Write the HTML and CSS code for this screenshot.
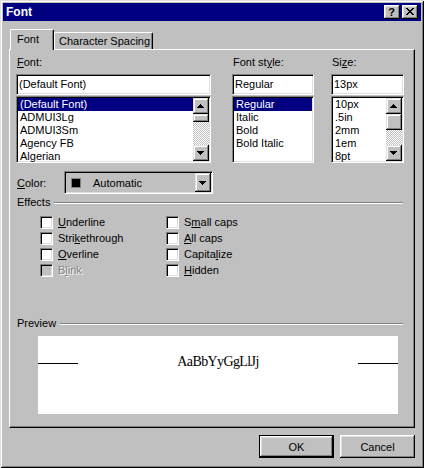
FILE: index.html
```html
<!DOCTYPE html>
<html>
<head>
<meta charset="utf-8">
<title>Font</title>
<link rel="stylesheet" href="styles.css">
</head>
<body>
<div class="window">
  <div class="titlebar">
    <span class="title">Font</span>
    <div class="caption-btns">
      <div class="cap-btn help">?</div>
      <div class="cap-btn">
        <svg width="16" height="14" viewBox="0 0 16 14" shape-rendering="crispEdges">
          <g fill="#000">
            <rect x="4" y="3" width="2" height="1"/><rect x="10" y="3" width="2" height="1"/>
            <rect x="5" y="4" width="2" height="1"/><rect x="9" y="4" width="2" height="1"/>
            <rect x="6" y="5" width="4" height="1"/>
            <rect x="7" y="6" width="2" height="1"/>
            <rect x="6" y="7" width="4" height="1"/>
            <rect x="5" y="8" width="2" height="1"/><rect x="9" y="8" width="2" height="1"/>
            <rect x="4" y="9" width="2" height="1"/><rect x="10" y="9" width="2" height="1"/>
          </g>
        </svg>
      </div>
    </div>
  </div>

  <div class="body">
    <div class="tabs">
      <div class="tab active">Font</div>
      <div class="tab">Character Spacing</div>
    </div>

    <div class="panel">
      <div class="fields">
        <div class="col col-font">
          <div class="label"><u>F</u>ont:</div>
          <div class="textbox">(Default Font)</div>
          <div class="list">
            <div class="items">
              <div class="item selected">(Default Font)</div>
              <div class="item">ADMUI3Lg</div>
              <div class="item">ADMUI3Sm</div>
              <div class="item">Agency FB</div>
              <div class="item">Algerian</div>
            </div>
            <div class="scrollbar">
              <div class="sb-btn">
                <svg width="16" height="16" viewBox="0 0 16 16" shape-rendering="crispEdges"><g fill="#000"><rect x="7" y="6" width="1" height="1"/><rect x="6" y="7" width="3" height="1"/><rect x="5" y="8" width="5" height="1"/><rect x="4" y="9" width="7" height="1"/></g></svg>
              </div>
              <div class="sb-track"><div class="sb-thumb thumb-small"></div></div>
              <div class="sb-btn">
                <svg width="16" height="16" viewBox="0 0 16 16" shape-rendering="crispEdges"><g fill="#000"><rect x="4" y="6" width="7" height="1"/><rect x="5" y="7" width="5" height="1"/><rect x="6" y="8" width="3" height="1"/><rect x="7" y="9" width="1" height="1"/></g></svg>
              </div>
            </div>
          </div>
        </div>

        <div class="col col-style">
          <div class="label">Font st<u>y</u>le:</div>
          <div class="textbox">Regular</div>
          <div class="list">
            <div class="items">
              <div class="item selected">Regular</div>
              <div class="item">Italic</div>
              <div class="item">Bold</div>
              <div class="item">Bold Italic</div>
            </div>
          </div>
        </div>

        <div class="col col-size">
          <div class="label">Si<u>z</u>e:</div>
          <div class="textbox">13px</div>
          <div class="list">
            <div class="items">
              <div class="item">10px</div>
              <div class="item">.5in</div>
              <div class="item">2mm</div>
              <div class="item">1em</div>
              <div class="item">8pt</div>
            </div>
            <div class="scrollbar">
              <div class="sb-btn">
                <svg width="16" height="16" viewBox="0 0 16 16" shape-rendering="crispEdges"><g fill="#000"><rect x="7" y="6" width="1" height="1"/><rect x="6" y="7" width="3" height="1"/><rect x="5" y="8" width="5" height="1"/><rect x="4" y="9" width="7" height="1"/></g></svg>
              </div>
              <div class="sb-track"><div class="sb-thumb"></div></div>
              <div class="sb-btn">
                <svg width="16" height="16" viewBox="0 0 16 16" shape-rendering="crispEdges"><g fill="#000"><rect x="4" y="6" width="7" height="1"/><rect x="5" y="7" width="5" height="1"/><rect x="6" y="8" width="3" height="1"/><rect x="7" y="9" width="1" height="1"/></g></svg>
              </div>
            </div>
          </div>
        </div>
      </div>

      <div class="color-row">
        <div class="color-label"><u>C</u>olor:</div>
        <div class="combo">
          <div class="swatch"></div>
          <div class="combo-text">Automatic</div>
          <div class="combo-btn">
            <svg width="16" height="19" viewBox="0 0 16 19" shape-rendering="crispEdges"><g fill="#000"><rect x="4" y="8" width="7" height="1"/><rect x="5" y="9" width="5" height="1"/><rect x="6" y="10" width="3" height="1"/><rect x="7" y="11" width="1" height="1"/></g></svg>
          </div>
        </div>
      </div>

      <div class="group-header">
        <span>Effects</span>
        <div class="groove"></div>
      </div>
      <div class="checks">
        <div class="check"><div class="box"></div><span><u>U</u>nderline</span></div>
        <div class="check"><div class="box"></div><span>S<u>m</u>all caps</span></div>
        <div class="check"><div class="box"></div><span>Stri<u>k</u>ethrough</span></div>
        <div class="check"><div class="box"></div><span><u>A</u>ll caps</span></div>
        <div class="check"><div class="box"></div><span><u>O</u>verline</span></div>
        <div class="check"><div class="box"></div><span>Capita<u>l</u>ize</span></div>
        <div class="check disabled"><div class="box"></div><span>B<u>l</u>ink</span></div>
        <div class="check"><div class="box"></div><span><u>H</u>idden</span></div>
      </div>

      <div class="group-header preview-header">
        <span>Preview</span>
        <div class="groove"></div>
      </div>
      <div class="preview">
        <div class="pv-line"></div>
        <div class="pv-text">AaBbYyGgLlJj</div>
        <div class="pv-line"></div>
      </div>
    </div>

    <div class="buttons">
      <div class="btn default">OK</div>
      <div class="btn">Cancel</div>
    </div>
  </div>
</div>
</body>
</html>
```
FILE: styles.css
```css
* { box-sizing: border-box; }

body {
  margin: 0;
  background: #c0c0c0;
  font-family: "Liberation Sans", Arial, sans-serif;
  font-size: 11px;
  color: #000;
}

.window {
  width: 424px;
  height: 468px;
  padding: 3px;
  background: #c0c0c0;
  box-shadow: inset 1px 1px #dfdfdf, inset -1px -1px #000, inset 2px 2px #fff, inset -2px -2px #808080;
  display: flex;
  flex-direction: column;
}

.titlebar {
  height: 18px;
  flex: none;
  background: #000080;
  display: flex;
  align-items: center;
  justify-content: space-between;
  padding: 0 3px 0 3px;
}

.title {
  color: #fff;
  font-weight: bold;
  font-size: 12px;
  line-height: 13px;
}

.caption-btns {
  display: flex;
  gap: 2px;
}

.cap-btn {
  width: 16px;
  height: 14px;
  background: #c0c0c0;
  box-shadow: inset -1px -1px #000, inset 1px 1px #fff, inset -2px -2px #808080, inset 2px 2px #dfdfdf;
  display: flex;
  align-items: center;
  justify-content: center;
}

.cap-btn svg { display: block; }

.help {
  font-weight: bold;
  font-size: 11px;
  line-height: 12px;
  padding-right: 1px;
}

.body {
  flex: 1;
  display: flex;
  flex-direction: column;
  padding: 8px 6px 0 6px;
}

.tabs {
  height: 20px;
  display: flex;
  align-items: flex-end;
  padding-left: 1px;
}

.tab {
  height: 17px;
  background: #c0c0c0;
  border-left: 1px solid #fff;
  border-top: 1px solid #fff;
  border-right: 1px solid #000;
  border-radius: 2px 2px 0 0;
  box-shadow: inset -1px 0 #808080;
  padding-left: 4px;
  width: 99px;
  display: flex;
  align-items: center;
  line-height: 13px;
}

.tab.active {
  width: 44px;
  height: 21px;
  margin-bottom: -1px;
  position: relative;
  z-index: 1;
  padding-left: 6px;
  padding-bottom: 2px;
}

.panel {
  height: 379px;
  flex: none;
  border: 1px solid;
  border-color: #fff #000 #000 #fff;
  box-shadow: inset -1px -1px #808080;
  padding: 4px 0 0 6px;
}

.fields {
  display: flex;
}

.col-font { width: 195px; }
.col-style { width: 82px; margin-left: 21px; }
.col-size { width: 73px; margin-left: 17px; }

.label {
  height: 20px;
  line-height: 13px;
  padding: 2px 0 0 1px;
}

.textbox, .list, .combo, .box {
  border: 1px solid;
  border-color: #808080 #fff #fff #808080;
  box-shadow: inset 1px 1px #000, inset -1px -1px #dfdfdf;
  background: #fff;
}

.textbox {
  height: 21px;
  line-height: 19px;
  padding-left: 2px;
}

.list {
  margin-top: 1px;
  height: 67px;
  display: flex;
  padding: 1px;
}

.items {
  flex: 1;
  padding-top: 0;
}

.item {
  height: 13px;
  line-height: 13px;
  padding-left: 2px;
}

.item.selected {
  background: #000080;
  color: #fff;
}

.scrollbar {
  width: 16px;
  display: flex;
  flex-direction: column;
}

.sb-btn, .sb-thumb, .combo-btn {
  background: #c0c0c0;
  box-shadow: inset -1px -1px #000, inset 1px 1px #dfdfdf, inset -2px -2px #808080, inset 2px 2px #fff;
}

.sb-btn {
  width: 16px;
  height: 16px;
  flex: none;
}

.sb-btn svg, .combo-btn svg { display: block; }

.sb-track {
  flex: 1;
  background: repeating-conic-gradient(#c0c0c0 0 25%, #fff 0 50%) 0 0 / 2px 2px;
}

.sb-thumb {
  height: 16px;
}

.sb-thumb.thumb-small {
  height: 8px;
}

.color-row {
  margin-top: 8px;
  display: flex;
  align-items: center;
}

.color-label {
  width: 48px;
  padding-left: 1px;
}

.combo {
  width: 149px;
  height: 23px;
  padding: 1px;
  display: flex;
  align-items: center;
  background: #c0c0c0;
}

.swatch {
  width: 10px;
  height: 10px;
  background: #000;
  margin-left: 5px;
  border: 1px solid #808080;
}

.combo-text {
  flex: 1;
  margin-left: 12px;
}

.combo-btn {
  width: 16px;
  align-self: stretch;
}

.group-header {
  margin-top: 2px;
  width: 386px;
  margin-left: 1px;
  height: 13px;
  line-height: 13px;
  display: flex;
}

.groove {
  flex: 1;
  height: 2px;
  margin-top: 6px;
  margin-left: 4px;
  border-top: 1px solid #808080;
  border-bottom: 1px solid #fff;
}

.checks {
  margin-top: 7px;
  padding-left: 24px;
  display: grid;
  grid-template-columns: 126px auto;
  row-gap: 3px;
}

.check {
  display: flex;
  height: 13px;
  line-height: 13px;
}

.box {
  width: 13px;
  height: 13px;
  flex: none;
}

.check span {
  margin-left: 5px;
}

.check.disabled .box {
  background: #c0c0c0;
}

.check.disabled span {
  color: #808080;
  text-shadow: 1px 1px #fff;
}

.preview-header {
  margin-top: 40px;
}

.preview {
  margin-top: 6px;
  margin-left: 22px;
  width: 360px;
  height: 78px;
  background: #fff;
  display: flex;
  align-items: flex-start;
}

.pv-line {
  width: 40px;
  height: 1px;
  background: #000;
  margin-top: 27px;
}

.pv-text {
  flex: 1;
  text-align: center;
  font-family: "Liberation Serif", "Times New Roman", serif;
  font-size: 14px;
  letter-spacing: -0.6px;
  line-height: 15px;
  margin-top: 18px;
}

.buttons {
  margin-top: 7px;
  display: flex;
  justify-content: flex-end;
  gap: 6px;
}

.btn {
  width: 75px;
  height: 23px;
  display: flex;
  align-items: center;
  justify-content: center;
  background: #c0c0c0;
  box-shadow: inset -1px -1px #000, inset 1px 1px #fff, inset -2px -2px #808080, inset 2px 2px #dfdfdf;
}

.btn.default {
  border: 1px solid #000;
}
```
